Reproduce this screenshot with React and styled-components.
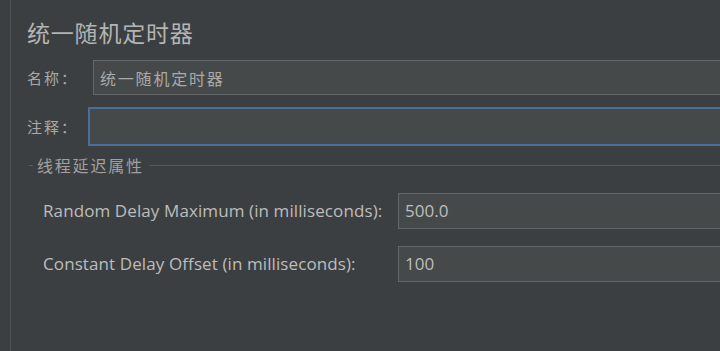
import React from "react";
import styled, { createGlobalStyle } from "styled-components";

const Global = createGlobalStyle`
  html, body { margin: 0; padding: 0; background: #3c3f41; }
  body { width: 720px; height: 351px; overflow: hidden; }
`;

const cjk = `"Noto Sans CJK SC", "Noto Sans", sans-serif`;
const latin = `"Open Sans", "Noto Sans CJK SC", sans-serif`;

const Page = styled.div`
  display: flex;
  width: 720px;
  height: 351px;
  overflow: hidden;
  background: #3c3f41;
`;

const Gutter = styled.div`
  width: 10px;
  flex: none;
  border-right: 1px solid #4f5254;
`;

const Panel = styled.div`
  flex: none;
  width: 740px;
  padding-left: 16px;
  display: flex;
  flex-direction: column;
`;

const Title = styled.h1`
  margin: 18px 0 0;
  height: 28px;
  font: 400 23px/28px ${cjk};
  letter-spacing: 0.8px;
  color: #b4b4b4;
`;

const Row = styled.div`
  display: flex;
  align-items: center;
  margin-top: ${(p) => p.$top}px;
`;

const CjkLabel = styled.span`
  flex: none;
  width: ${(p) => p.$width}px;
  font: 400 15px/20px ${cjk};
  letter-spacing: 2px;
  color: #a9a9a9;
`;

const TextField = styled.div`
  flex: 1;
  box-sizing: border-box;
  height: ${(p) => p.$height}px;
  background: #45494a;
  border: ${(p) => (p.$focused ? "2px solid #4a6e9a" : "1px solid #646667")};
  padding-left: 6px;
  display: flex;
  align-items: center;
  font: 400 16px/20px ${cjk};
  letter-spacing: 1.8px;
  color: #a9a9a9;
`;

const GroupHeader = styled.div`
  display: flex;
  align-items: center;
  height: 20px;
  margin-top: 9px;
  margin-left: 2px;
  &::before {
    content: "";
    width: 4px;
    height: 1px;
    background: #5b5e60;
    margin-right: 4px;
  }
  &::after {
    content: "";
    flex: 1;
    height: 1px;
    background: #55585a;
    margin-left: 5px;
  }
`;

const GroupTitle = styled.span`
  font: 400 16px/20px ${cjk};
  letter-spacing: 1.8px;
  color: #a0a0a0;
`;

const Fields = styled.div`
  display: grid;
  grid-template-columns: 355px 1fr;
  row-gap: 17px;
  margin-top: 18px;
  padding-left: 16px;
  align-items: center;
`;

const FieldLabel = styled.span`
  font: 400 17px/22px ${latin};
  letter-spacing: 0.1px;
  color: #bdbdbd;
`;

const NumberField = styled.div`
  box-sizing: border-box;
  height: 36px;
  background: #45494a;
  border: 1px solid #646667;
  padding-left: 6px;
  display: flex;
  align-items: center;
  font: 400 17px/22px ${latin};
  color: #bdbdbd;
`;

export default function App() {
  return (
    <Page>
      <Global />
      <Gutter />
      <Panel>
        <Title>统一随机定时器</Title>
        <Row $top={14}>
          <CjkLabel $width={66}>名称：</CjkLabel>
          <TextField $height={35}>统一随机定时器</TextField>
        </Row>
        <Row $top={12}>
          <CjkLabel $width={61}>注释：</CjkLabel>
          <TextField $height={39} $focused />
        </Row>
        <GroupHeader>
          <GroupTitle>线程延迟属性</GroupTitle>
        </GroupHeader>
        <Fields>
          <FieldLabel>Random Delay Maximum (in milliseconds):</FieldLabel>
          <NumberField>500.0</NumberField>
          <FieldLabel>Constant Delay Offset (in milliseconds):</FieldLabel>
          <NumberField>100</NumberField>
        </Fields>
      </Panel>
    </Page>
  );
}
